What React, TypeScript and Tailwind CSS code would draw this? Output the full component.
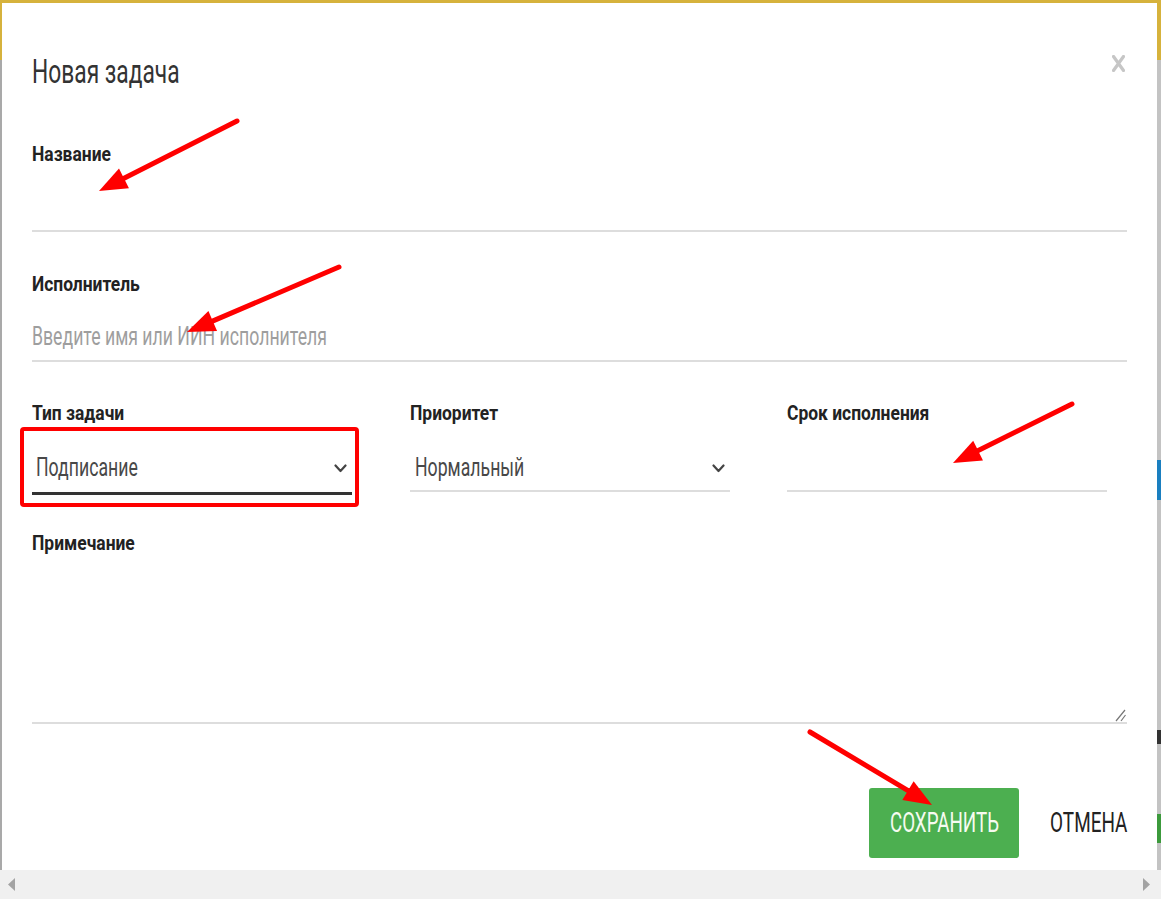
import React from "react";

type Arrow = { x1: number; y1: number; x2: number; y2: number };

const arrows: Arrow[] = [
  { x1: 237, y1: 121, x2: 99, y2: 191 },
  { x1: 339, y1: 267, x2: 187, y2: 332 },
  { x1: 1072, y1: 404, x2: 953, y2: 463 },
  { x1: 810, y1: 732, x2: 932, y2: 805 },
];

function arrowGeom(a: Arrow) {
  const dx = a.x2 - a.x1;
  const dy = a.y2 - a.y1;
  const len = Math.hypot(dx, dy);
  const ux = dx / len;
  const uy = dy / len;
  const L = 28;
  const W = 11;
  const bx = a.x2 - ux * L;
  const by = a.y2 - uy * L;
  const nx = -uy;
  const ny = ux;
  return {
    poly: `${a.x2},${a.y2} ${bx + nx * W},${by + ny * W} ${bx - nx * W},${by - ny * W}`,
    lx: a.x2 - ux * (L - 6),
    ly: a.y2 - uy * (L - 6),
  };
}

function Label({ children, className = "" }: { children: React.ReactNode; className?: string }) {
  return (
    <label className={"text-[21px] leading-[24px] font-bold text-[#222] " + className}>
      <span className="inline-block whitespace-nowrap origin-left scale-x-[0.83]">{children}</span>
    </label>
  );
}

function Value({ children, className = "" }: { children: React.ReactNode; className?: string }) {
  return (
    <div className={"text-[26px] leading-[30px] " + className}>
      <span className="inline-block whitespace-nowrap origin-left scale-x-[0.68]">{children}</span>
    </div>
  );
}

function Chevron() {
  return (
    <svg width="13" height="9" viewBox="0 0 13 9" className="mt-[12px] mr-[5px] shrink-0">
      <path d="M1.5 1.5 L6.5 7 L11.5 1.5" fill="none" stroke="#444" strokeWidth="2.2" strokeLinecap="round" strokeLinejoin="round" />
    </svg>
  );
}

export default function App() {
  return (
    <div className="relative w-[1161px] h-[899px] overflow-hidden bg-white flex flex-col font-['Roboto',sans-serif]">
      {/* top header strip of background page */}
      <div className="h-[3px] bg-[#d6b23c] shrink-0" />
      <div className="flex flex-1 min-h-0">
        {/* left background strip */}
        <div className="w-[2px] bg-[#a9a9a9] flex flex-col">
          <div className="h-[57px] bg-[#d6b23c]" />
        </div>

        {/* modal */}
        <div className="flex-1 flex flex-col px-[30px] pt-[50px]">
          <div className="flex justify-between items-start">
            <h2 className="text-[33px] leading-[38px] text-[#333] font-normal">
              <span className="inline-block whitespace-nowrap origin-left scale-x-[0.69]">Новая задача</span>
            </h2>
            <svg width="13" height="17" viewBox="0 0 13 17" className="mt-[2px] mr-[2px]">
              <path d="M1.5 1.5 L11.5 15.5 M11.5 1.5 L1.5 15.5" stroke="#c6c6c6" strokeWidth="3.2" strokeLinecap="round" />
            </svg>
          </div>

          <Label className="mt-[51px]">Название</Label>
          <div className="h-[66px] border-b-2 border-[#dddddd]" />

          <Label className="mt-[40px]">Исполнитель</Label>
          <div className="h-[66px] border-b-2 border-[#dddddd] pt-[25px]">
            <Value className="text-[#9e9e9e]">Введите имя или ИИН исполнителя</Value>
          </div>

          <div className="mt-[39px] grid grid-cols-[320px_320px_320px] gap-x-[57.5px] items-start">
            <div className="flex flex-col">
              <Label>Тип задачи</Label>
              <div className="h-[70px] border-b-[3px] border-[#333] pt-[27px] pl-[4px] flex justify-between items-start">
                <Value className="text-[#484848]">Подписание</Value>
                <Chevron />
              </div>
            </div>
            <div className="flex flex-col">
              <Label>Приоритет</Label>
              <div className="h-[67px] border-b-2 border-[#dddddd] pt-[27px] pl-[5px] flex justify-between items-start">
                <Value className="text-[#484848]">Нормальный</Value>
                <Chevron />
              </div>
            </div>
            <div className="flex flex-col">
              <Label>Срок исполнения</Label>
              <div className="h-[67px] border-b-2 border-[#dddddd]" />
            </div>
          </div>

          <Label className="mt-[36px]">Примечание</Label>
          <div className="relative h-[169px] border-b-2 border-[#dddddd]">
            <svg width="12" height="13" viewBox="0 0 12 13" className="absolute right-[1px] bottom-0">
              <path d="M11 1 L2 12 M11.5 6 L7 12" stroke="#777" strokeWidth="1.2" />
            </svg>
          </div>

          <div className="mt-[64px] flex justify-end items-center">
            <button className="w-[150px] h-[70px] bg-[#4caf50] rounded-[3px] flex items-center justify-center text-[27px] leading-[30px] text-[#f6fbf0]">
              <span className="inline-block whitespace-nowrap origin-center scale-x-[0.695]">СОХРАНИТЬ</span>
            </button>
            <div className="ml-[33px] w-[75px] flex justify-end text-[27px] leading-[30px] text-[#222]">
              <span className="inline-block whitespace-nowrap origin-right scale-x-[0.70]">ОТМЕНА</span>
            </div>
          </div>
        </div>

        {/* right background strip */}
        <div className="w-[4px] bg-[#c3c3c3] flex flex-col">
          <div className="h-[57px] bg-[#d6b23c]" />
          <div className="mt-[400px] h-[40px] bg-[#1a7fc0]" />
          <div className="mt-[230px] h-[14px] bg-[#333]" />
          <div className="mt-[70px] h-[29px] bg-[#3c9a3c]" />
        </div>
      </div>

      {/* bottom horizontal scrollbar */}
      <div className="h-[29px] shrink-0 bg-[#f0f0f0] flex items-center justify-between pl-[8px] pr-[11px]">
        <svg width="7" height="13" viewBox="0 0 7 13">
          <path d="M7 0 L0 6.5 L7 13 Z" fill="#a3a3a3" />
        </svg>
        <svg width="7" height="13" viewBox="0 0 7 13">
          <path d="M0 0 L7 6.5 L0 13 Z" fill="#a3a3a3" />
        </svg>
      </div>

      {/* red annotation box */}
      <div className="absolute left-[20px] top-[427px] w-[339px] h-[80px] border-[4px] border-[#ff0000] rounded-[4px] pointer-events-none" />

      {/* red annotation arrows */}
      <svg className="absolute inset-0 pointer-events-none" width="1161" height="899" viewBox="0 0 1161 899">
        {arrows.map((a, i) => {
          const g = arrowGeom(a);
          return (
            <g key={i}>
              <line x1={a.x1} y1={a.y1} x2={g.lx} y2={g.ly} stroke="#ff0000" strokeWidth="5" strokeLinecap="round" />
              <polygon points={g.poly} fill="#ff0000" />
            </g>
          );
        })}
      </svg>
    </div>
  );
}
